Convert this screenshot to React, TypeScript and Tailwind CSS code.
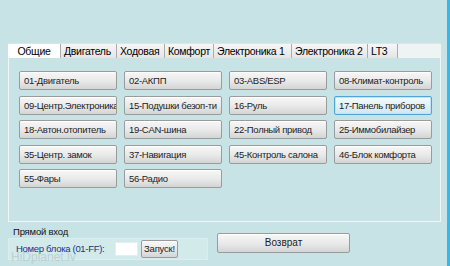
import React from "react";

const tabs = [
  { label: "Общие", w: "w-[52px]", active: true },
  { label: "Двигатель", w: "w-[56px]" },
  { label: "Ходовая", w: "w-[48px]" },
  { label: "Комфорт", w: "w-[49px]" },
  { label: "Электроника 1", w: "w-[78px]" },
  { label: "Электроника 2", w: "w-[76px]" },
  { label: "LT3", w: "w-[30px]" },
];

const blocks = [
  "01-Двигатель",
  "02-АКПП",
  "03-ABS/ESP",
  "08-Климат-контроль",
  "09-Центр.Электроника",
  "15-Подушки безоп-ти",
  "16-Руль",
  "17-Панель приборов",
  "18-Автон.отопитель",
  "19-CAN-шина",
  "22-Полный привод",
  "25-Иммобилайзер",
  "35-Центр. замок",
  "37-Навигация",
  "45-Контроль салона",
  "46-Блок комфорта",
  "55-Фары",
  "56-Радио",
];

const btn =
  "rounded-[2px] border border-[#9a9c9c] bg-gradient-to-b from-[#f7f7f7] via-[#eaeaea] to-[#d3d5d5] shadow-[inset_0_1px_0_#ffffff] text-[#1c1c1c]";

export default function App() {
  return (
    <div
      className="w-[450px] h-[266px] bg-[#c8e3e5] flex overflow-hidden relative"
      style={{ fontFamily: '"Liberation Sans", Arial, sans-serif' }}
    >
      <div className="flex-1 flex flex-col pl-[8px] pt-[43px]">
        {/* tab strip */}
        <div className="w-[433px] h-[15px] flex bg-[#eef3f3] border-t border-[#dfe5e5]">
          {tabs.map((t) => (
            <div
              key={t.label}
              className={
                t.w +
                " h-full text-[10.5px] tracking-[-0.3px] leading-[14px] whitespace-nowrap " +
                (t.active
                  ? "bg-white text-center text-black"
                  : "border-l border-[#a9adad] bg-gradient-to-b from-[#f6f6f6] to-[#e4e6e6] pl-[3px] text-black")
              }
            >
              {t.label}
            </div>
          ))}
          <div className="border-l border-[#a9adad] h-full" />
        </div>

        {/* panel */}
        <div className="w-[433px] h-[164px] border border-t-0 border-[#eef6f6] pt-[13px] pl-[10px]">
          <div className="grid grid-cols-[98px_98px_98px_98px] auto-rows-[19px] gap-x-[7px] gap-y-[5.5px]">
            {blocks.map((b) => (
              <div
                key={b}
                className={
                  (b.startsWith("17")
                    ? "rounded-[2px] border border-[#4fa6d6] bg-gradient-to-b from-[#f3fafd] via-[#e4f2f9] to-[#cfe6f2] shadow-[inset_0_0_0_1px_#bfe4f5] text-[#1c1c1c]"
                    : btn) +
                  " text-[9.5px] tracking-[-0.3px] leading-[17px] pl-[4px] whitespace-nowrap overflow-hidden"
                }
              >
                {b}
              </div>
            ))}
          </div>
        </div>

        {/* bottom */}
        <div className="flex items-start">
          <div className="flex flex-col">
            <div className="text-[9.5px] tracking-[-0.2px] leading-[12px] text-[#111] pl-[5px] mt-[4px]">
              Прямой вход
            </div>
            <div className="w-[200px] h-[22px] bg-[#d3eaeb] border border-[#dbeeee] flex items-center">
              <span className="text-[9.5px] tracking-[-0.3px] whitespace-nowrap text-[#1f2f86] pl-[7px] w-[106px]">
                Номер блока (01-FF):
              </span>
              <div className="w-[23px] h-[14px] bg-white border border-[#e6eeee]" />
              <div className={btn + " ml-[3px] w-[37px] h-[18px] text-[9.5px] tracking-[-0.2px] leading-[16px] text-center -mt-[1px]"}>
                Запуск!
              </div>
            </div>
          </div>
          <div className={btn + " ml-[9px] mt-[11px] w-[133px] h-[20px] text-[10px] leading-[18px] text-center"}>
            Возврат
          </div>
        </div>
      </div>
      <div className="w-[3px] h-full bg-[#3db6e3]" />

      <div className="absolute left-[11px] top-[250px] text-[12px] leading-[14px] text-[#b3c6c7] opacity-70 pointer-events-none">
        HiDplanet.lv
      </div>
    </div>
  );
}
